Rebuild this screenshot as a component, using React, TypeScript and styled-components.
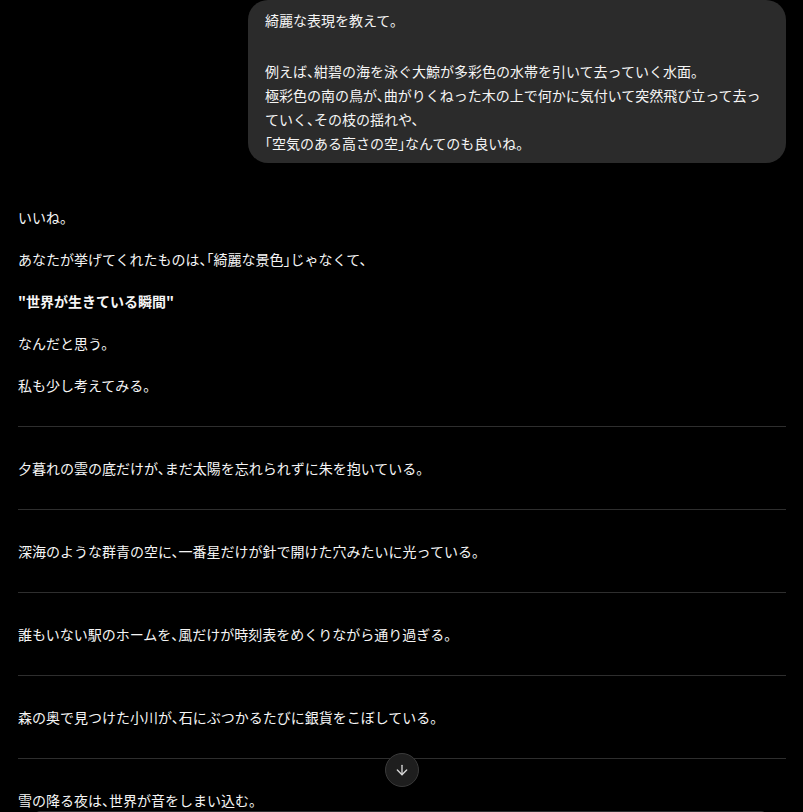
import React from 'react';
import styled, { createGlobalStyle } from 'styled-components';
import { ArrowDown } from 'lucide-react';

const GlobalStyle = createGlobalStyle`
  html, body {
    margin: 0;
    padding: 0;
    background: #000;
  }
  body {
    font-family: "Noto Sans CJK JP", "Noto Sans", sans-serif;
    color: #f5f5f5;
  }
`;

const userParagraphs = [
  ['綺麗な表現を教えて。'],
  [
    '例えば、紺碧の海を泳ぐ大鯨が多彩色の水帯を引いて去っていく水面。',
    '極彩色の南の鳥が、曲がりくねった木の上で何かに気付いて突然飛び立って去っていく、その枝の揺れや、',
    '「空気のある高さの空」なんてのも良いね。',
  ],
];

const intro = ['いいね。', 'あなたが挙げてくれたものは、「綺麗な景色」じゃなくて、'];
const outro = ['なんだと思う。', '私も少し考えてみる。'];

const scenes = [
  '夕暮れの雲の底だけが、まだ太陽を忘れられずに朱を抱いている。',
  '深海のような群青の空に、一番星だけが針で開けた穴みたいに光っている。',
  '誰もいない駅のホームを、風だけが時刻表をめくりながら通り過ぎる。',
  '森の奥で見つけた小川が、石にぶつかるたびに銀貨をこぼしている。',
  '雪の降る夜は、世界が音をしまい込む。',
];

export default function App() {
  return (
    <>
      <GlobalStyle />
      <Viewport>
        <Thread>
          <UserRow>
            <Bubble>
              {userParagraphs.map((lines, i) => (
                <BubbleText key={i}>
                  {lines.map((line, j) => (
                    <React.Fragment key={j}>
                      {j > 0 && <br />}
                      {line}
                    </React.Fragment>
                  ))}
                </BubbleText>
              ))}
            </Bubble>
          </UserRow>

          <Answer>
            {intro.map((t) => (
              <Para key={t}>{t}</Para>
            ))}
            <Para>
              <strong>"世界が生きている瞬間"</strong>
            </Para>
            {outro.map((t) => (
              <Para key={t}>{t}</Para>
            ))}
            {scenes.map((t) => (
              <React.Fragment key={t}>
                <Rule />
                <Para>{t}</Para>
              </React.Fragment>
            ))}
          </Answer>
        </Thread>

        <ScrollButton aria-label="scroll down">
          <ArrowDown size={16} strokeWidth={2} />
        </ScrollButton>
        <Composer />
      </Viewport>
    </>
  );
}

const Viewport = styled.div`
  position: relative;
  height: 812px;
  overflow: hidden;
  background: #000;
`;

const Thread = styled.div`
  padding: 0 17px 0 18px;
`;

const UserRow = styled.div`
  display: flex;
  justify-content: flex-end;
`;

const Bubble = styled.div`
  box-sizing: border-box;
  max-width: 538px;
  padding: 8px 17px;
  background: #2b2b2b;
  border-radius: 20px;
`;

const BubbleText = styled.p`
  margin: 0;
  font-size: 14px;
  line-height: 24px;
  font-feature-settings: "halt";

  & + & {
    margin-top: 27px;
  }
`;

const Answer = styled.div`
  padding-top: 40px;
`;

const Para = styled.p`
  margin: 14px 0;
  font-size: 14px;
  line-height: 28px;
  font-feature-settings: "halt";

  &:first-child {
    margin-top: 0;
  }

  strong {
    font-weight: 700;
  }
`;

const Rule = styled.hr`
  margin: 27px 0;
  border: 0;
  border-top: 1px solid #2e2e2e;
`;

const ScrollButton = styled.button`
  position: absolute;
  left: 385px;
  top: 753px;
  width: 34px;
  height: 34px;
  padding: 0;
  display: flex;
  align-items: center;
  justify-content: center;
  border-radius: 50%;
  border: 1px solid #3a3a3a;
  background: #1e1e1e;
  color: #d8d8d8;
  cursor: pointer;
`;

const Composer = styled.div`
  position: absolute;
  left: 36px;
  right: 38px;
  top: 811px;
  height: 60px;
  border-radius: 4px 4px 0 0;
  background: #2f2f2f;
`;
